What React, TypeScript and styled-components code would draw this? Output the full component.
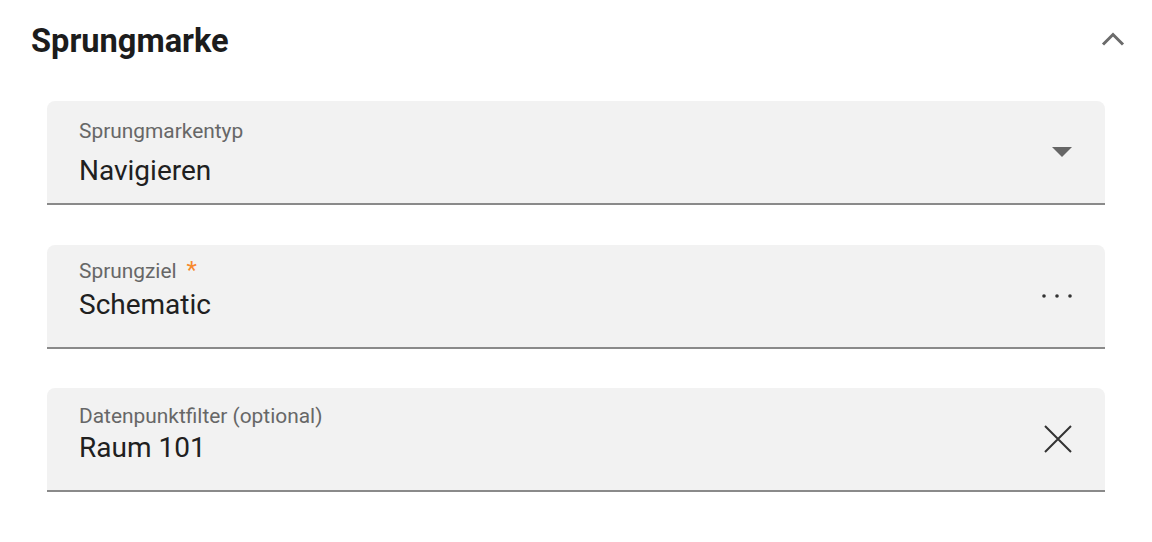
import styled, { createGlobalStyle } from "styled-components";

const GlobalStyle = createGlobalStyle`
    html, body {
        margin: 0;
        padding: 0;
        background: #ffffff;
        font-family: Roboto, "Noto Sans", "Liberation Sans", sans-serif;
    }
`

type FieldProps = {
    label: string
    value: string
    required?: boolean
    top: number
    gap: number
    icon: React.ReactNode
}

function Field ({ label, value, required, top, gap, icon }: FieldProps) {
    return (
        <FieldBox>
            <FieldText $top={top} $gap={gap}>
                <Label>
                    {label}
                    {required && <Star>*</Star>}
                </Label>
                <Value>{value}</Value>
            </FieldText>
            <IconSlot>{icon}</IconSlot>
        </FieldBox>
    )
}

const ChevronUp = () => (
    <svg width="24" height="16" viewBox="0 0 24 16">
        <polyline points="2,13.5 12,3.5 22,13.5" fill="none" stroke="#6b6b6b" strokeWidth="3" />
    </svg>
)

const DropArrow = () => (
    <svg width="20" height="10" viewBox="0 0 20 10">
        <polygon points="0,0 20,0 10,10" fill="#666666" />
    </svg>
)

const Dots = () => (
    <svg width="30" height="6" viewBox="0 0 30 6">
        <circle cx="2" cy="3" r="1.8" fill="#333333" />
        <circle cx="15" cy="3" r="1.8" fill="#333333" />
        <circle cx="28" cy="3" r="1.8" fill="#333333" />
    </svg>
)

const CloseX = () => (
    <svg width="28" height="28" viewBox="0 0 28 28">
        <path d="M1 1 L27 27 M27 1 L1 27" stroke="#333333" strokeWidth="2" fill="none" />
    </svg>
)

export default function App () {
    return (
        <Page>
            <GlobalStyle />
            <Header>
                <Title>Sprungmarke</Title>
                <CollapseButton aria-label="Einklappen">
                    <ChevronUp />
                </CollapseButton>
            </Header>
            <FieldList>
                <Field label="Sprungmarkentyp" value="Navigieren" top={18} gap={11} icon={<DropArrow />} />
                <Field label="Sprungziel" value="Schematic" required top={13} gap={5} icon={<Dots />} />
                <Field label="Datenpunktfilter (optional)" value="Raum 101" top={16} gap={3} icon={<CloseX />} />
            </FieldList>
        </Page>
    )
}

const Page = styled.div`
    width: 1152px;
    height: 542px;
    box-sizing: border-box;
`

const Header = styled.div`
    display: flex;
    align-items: center;
    justify-content: space-between;
    padding: 22px 27px 0 31px;
`

const Title = styled.h2`
    margin: 0;
    font-size: 32.6px;
    line-height: 38px;
    font-weight: 700;
    color: #1c1c1c;
`

const CollapseButton = styled.button`
    display: flex;
    align-items: center;
    justify-content: center;
    padding: 0;
    border: none;
    background: none;
    margin-top: -4px;
`

const FieldList = styled.div`
    display: flex;
    flex-direction: column;
    gap: 39.5px;
    padding: 41px 47px 0 47px;
`

const FieldBox = styled.div`
    display: flex;
    align-items: stretch;
    height: 102px;
    background: #f2f2f2;
    border-bottom: 2px solid #8a8a8a;
    border-radius: 8px 8px 0 0;
    padding: 0 33px 0 32px;
`

const FieldText = styled.div<{ $top: number, $gap: number }>`
    flex: 1;
    display: flex;
    flex-direction: column;
    gap: ${p => p.$gap}px;
    padding-top: ${p => p.$top}px;
`

const Label = styled.div`
    font-size: 20.9px;
    line-height: 24px;
    color: #676767;
`

const Star = styled.span`
    color: #f7892d;
    margin-left: 10px;
    font-size: 24px;
`

const Value = styled.div`
    font-size: 28px;
    line-height: 34px;
    color: #202020;
`

const IconSlot = styled.div`
    display: flex;
    align-items: center;
    justify-content: flex-end;
`
